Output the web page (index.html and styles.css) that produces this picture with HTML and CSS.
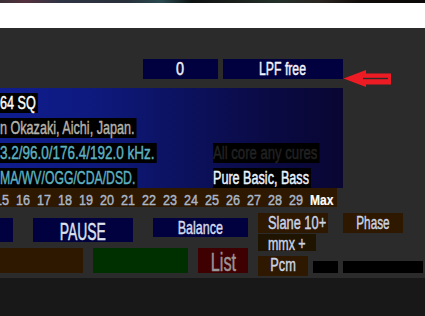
FILE: index.html
```html
<!DOCTYPE html>
<html>
<head>
<meta charset="utf-8">
<link rel="stylesheet" href="styles.css">
</head>
<body>
<div class="strip"></div>
<div class="whitebar"></div>
<main class="app">
  <div class="toprow">
    <div class="nbox b0"><span class="t sx80">0</span></div>
    <div class="nbox blpf"><span class="t sx68">LPF free</span></div>
  </div>
  <svg class="arrow" width="52" height="22" viewBox="0 0 52 22">
    <polygon points="1.5,10.5 24,2 24,5.5 49,5.5 49,16.5 24,16.5 24,19" fill="#ed1c24"/>
    <line x1="21" y1="10.5" x2="46" y2="10.5" stroke="#2a2b2a" stroke-width="1.4"/>
  </svg>
  <section class="panel">
    <div class="c1"><span class="ptxt white sx70">64 SQ</span></div>
    <div class="c1"><span class="ptxt gray sx70">n Okazaki, Aichi, Japan.</span></div>
    <div class="c1"><span class="ptxt teal sx75">3.2/96.0/176.4/192.0 kHz.</span></div>
    <div class="c2"><span class="ptxt dim sx73">All core any cures</span></div>
    <div class="c1"><span class="ptxt teal sx68">MA/WV/OGG/CDA/DSD.</span></div>
    <div class="c2"><span class="ptxt white2 sx70">Pure Basic, Bass</span></div>
  </section>
  <div class="nums">
    <span class="n"><span class="t">15</span></span>
    <span class="n"><span class="t">16</span></span>
    <span class="n"><span class="t">17</span></span>
    <span class="n"><span class="t">18</span></span>
    <span class="n"><span class="t">19</span></span>
    <span class="n"><span class="t">20</span></span>
    <span class="n"><span class="t">21</span></span>
    <span class="n"><span class="t">22</span></span>
    <span class="n"><span class="t">23</span></span>
    <span class="n"><span class="t">24</span></span>
    <span class="n"><span class="t">25</span></span>
    <span class="n"><span class="t">26</span></span>
    <span class="n"><span class="t">27</span></span>
    <span class="n"><span class="t">28</span></span>
    <span class="n"><span class="t">29</span></span>
    <span class="n max"><span class="t">Max</span></span>
  </div>
  <div class="controls">
    <div class="leftctl">
      <div class="btnrow">
        <div class="nbtn stub"></div>
        <div class="nbtn pause"><span class="t sx58">PAUSE</span></div>
        <div class="nbtn balance"><span class="t sx66">Balance</span></div>
      </div>
      <div class="colrow">
        <div class="cbox brown"></div>
        <div class="cbox green"></div>
        <div class="cbox red"><span class="t sx65">List</span></div>
      </div>
    </div>
    <div class="rightctl">
      <div class="rrow">
        <div class="bbox slane"><span class="t sx675 left">Slane 10+</span></div>
        <div class="bbox phase"><span class="t sx62">Phase</span></div>
      </div>
      <div class="bbox mmx"><span class="t sx655">mmx +</span></div>
      <div class="rrow pcmrow">
        <div class="bbox pcm"><span class="t sx71">Pcm</span></div>
        <div class="blk small"></div>
        <div class="blk long"></div>
      </div>
    </div>
  </div>
</main>
</body>
</html>
```
FILE: styles.css
```css
html, body {
  margin: 0;
  padding: 0;
}
body {
  background: #181818;
  font-family: "Liberation Sans", Arial, sans-serif;
  width: 425px;
  height: 316px;
  overflow: hidden;
}
.strip {
  height: 3px;
  background: linear-gradient(90deg, #3b3036 0%, #55303d 6%, #2f3444 14%, #28303a 30%, #2a4a50 38%, #0e1312 45%, #1a1f1c 55%, #23302a 65%, #2b2621 75%, #100c0a 85%, #0a0808 100%);
}
.whitebar {
  height: 25px;
  background: #ffffff;
}
.app {
  position: relative;
  height: 250px;
  background: #2a2b2a;
  overflow: hidden;
}
.t {
  display: inline-block;
  white-space: nowrap;
  transform: scaleX(var(--sx, 1));
  -webkit-text-stroke: 0.45px currentColor;
}
.t.left { transform-origin: left center; }
.sx80 { --sx: 0.8; }
.sx68 { --sx: 0.68; }
.sx70 { --sx: 0.70; }
.sx75 { --sx: 0.75; }
.sx73 { --sx: 0.73; }
.sx58 { --sx: 0.58; }
.sx66 { --sx: 0.66; }
.sx65 { --sx: 0.65; }
.sx675 { --sx: 0.675; }
.sx62 { --sx: 0.62; }
.sx655 { --sx: 0.655; }
.sx71 { --sx: 0.71; }

/* top row */
.toprow {
  display: flex;
  gap: 5px;
  padding-top: 31px;
  margin-left: 143px;
}
.nbox {
  height: 20px;
  background: #01013f;
  color: #f2f4ff;
  font-size: 18px;
  line-height: 21px;
  text-align: center;
  overflow: visible;
}
.b0 { width: 75px; }
.blpf { width: 120px; }

.arrow {
  position: absolute;
  left: 342px;
  top: 40px;
}

/* panel */
.panel {
  margin-top: 9px;
  width: 343px;
  height: 100px;
  box-sizing: border-box;
  padding-top: 5px;
  display: grid;
  grid-template-columns: 213px 1fr;
  grid-auto-rows: 20px;
  row-gap: 5px;
  background: linear-gradient(90deg, #0f1d8e 0%, #0e1a80 25%, #0c1260 52%, #0a0a44 78%, #090632 100%);
  overflow: hidden;
}
.c1 { grid-column: 1; }
.c2 { grid-column: 2; }
.panel .c1:nth-child(3) { grid-row: 3; }
.panel .c2:nth-child(4) { grid-row: 3; }
.panel .c1:nth-child(5) { grid-row: 4; }
.panel .c2:nth-child(6) { grid-row: 4; }
.ptxt {
  display: inline-block;
  height: 20px;
  line-height: 21px;
  font-size: 18px;
  background: #000;
  padding-right: 3px;
  white-space: nowrap;
  transform: scaleX(var(--sx, 1));
  transform-origin: left center;
  -webkit-text-stroke: 0.45px currentColor;
}
.white { color: #ffffff; }
.gray { color: #b4b2aa; }
.teal { color: #5cb2c2; }
.dim { color: #222222; }
.white2 { color: #eaf4ff; }

/* number row */
.nums {
  display: flex;
  width: fit-content;
  margin-left: -5px;
  height: 19px;
  box-sizing: border-box;
  padding: 4px 3px 0 0;
  background: #2e1800;
  color: #a9b6ca;
  font-size: 15px;
  line-height: 16px;
}
.n {
  width: 21px;
  flex: none;
}
.n .t {
  --sx: 0.84;
  transform-origin: left center;
}
.n.max {
  width: 24px;
  color: #ffffff;
  font-weight: bold;
}
.n.max .t { --sx: 0.8; -webkit-text-stroke: 0.2px currentColor; }

/* controls */
.controls {
  display: flex;
  gap: 10px;
  align-items: flex-start;
}
.leftctl {
  width: 248px;
  padding-top: 10.7px;
  display: flex;
  flex-direction: column;
  gap: 6.3px;
}
.btnrow {
  display: flex;
  align-items: flex-start;
  gap: 20.6px;
}
.nbtn {
  background: #01013f;
  color: #dde2f0;
  text-align: center;
}
.stub { width: 12.7px; height: 24px; }
.pause {
  width: 99.4px;
  height: 24px;
  font-size: 24px;
  line-height: 27px;
}
.balance {
  width: 94.4px;
  height: 19.6px;
  font-size: 19px;
  line-height: 20px;
  color: #d4dcec;
}
.colrow {
  display: flex;
  gap: 10px;
}
.cbox { height: 25px; }
.brown { width: 83px; background: #2e1800; }
.green { width: 95px; background: #003000; }
.red {
  width: 50px;
  background: #3e0000;
  color: #9a9696;
  font-size: 25px;
  line-height: 28px;
  text-align: center;
}

.rightctl {
  padding-top: 6.3px;
  display: flex;
  flex-direction: column;
}
.rrow {
  display: flex;
  align-items: flex-start;
  gap: 15px;
}
.bbox {
  background: #2e1800;
  color: #c9d5e6;
  font-size: 19px;
  line-height: 19px;
  height: 19.4px;
  text-align: center;
  overflow: hidden;
}
.slane {
  width: 70px;
  text-align: left;
  padding-left: 10px;
  box-sizing: border-box;
}
.phase { width: 60px; }
.mmx {
  width: 57.7px;
  height: 16.7px;
  margin-top: 1.3px;
  background: #1f1400;
}
.pcmrow {
  margin-top: 5.3px;
  gap: 5.3px;
}
.pcm {
  width: 49.7px;
  height: 19.7px;
  font-size: 18px;
  line-height: 19px;
}
.blk {
  background: #000;
  height: 11.7px;
  margin-top: 5px;
}
.small { width: 25px; }
.long { width: 79.7px; margin-left: -0.3px; }
```
